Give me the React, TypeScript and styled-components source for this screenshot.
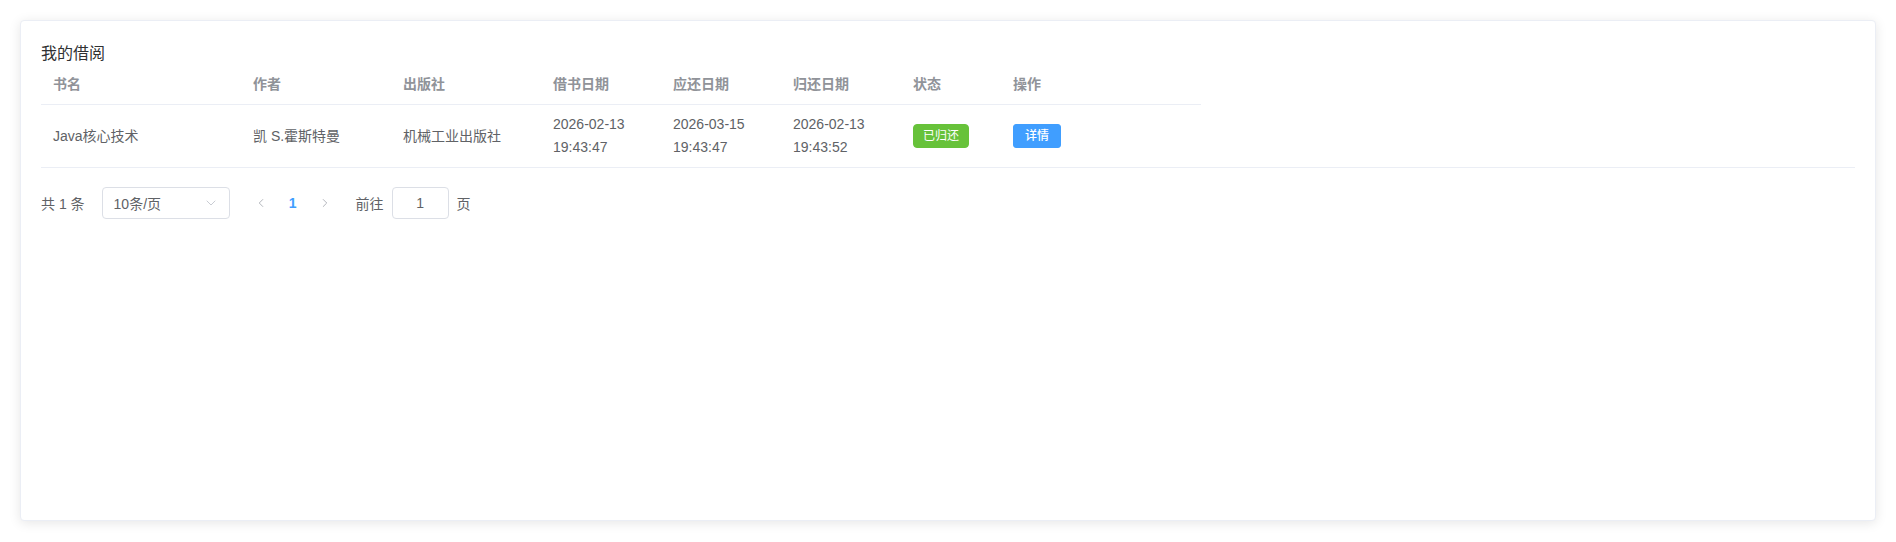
import React from "react";
import styled, { createGlobalStyle } from "styled-components";
import { ChevronDown, ChevronLeft, ChevronRight } from "lucide-react";

const GlobalStyle = createGlobalStyle`
  html, body {
    margin: 0;
    padding: 0;
    background: #fff;
  }
  body {
    font-family: "Liberation Sans", "Noto Sans CJK SC", Arial, sans-serif;
    color: #606266;
    -webkit-font-smoothing: antialiased;
  }
  * {
    box-sizing: border-box;
  }
`;

const Page = styled.div`
  padding: 20px;
`;

const Card = styled.div`
  height: 501px;
  background: #fff;
  border: 1px solid #ebeef5;
  border-radius: 4px;
  box-shadow: 0 2px 12px 0 rgba(0, 0, 0, 0.1);
  padding: 20px;
  overflow: hidden;
`;

const Title = styled.div`
  padding-top: 2px;
  font-size: 16px;
  line-height: 22px;
  color: #303133;
`;

const Table = styled.div`
  border-bottom: 1px solid #ebeef5;
`;

const Row = styled.div<{ $head?: boolean }>`
  display: grid;
  grid-template-columns: 200px 150px 150px 120px 120px 120px 100px 200px;
  width: 1160px;
  align-items: center;
  border-bottom: ${(p) => (p.$head ? "1px solid #ebeef5" : "none")};
`;

const Cell = styled.div<{ $head?: boolean }>`
  padding: 8px 12px;
  font-size: 14px;
  line-height: 23px;
  color: ${(p) => (p.$head ? "#909399" : "#606266")};
  font-weight: ${(p) => (p.$head ? 700 : 400)};
  white-space: nowrap;
`;

const Tag = styled.span`
  display: inline-block;
  height: 24px;
  line-height: 22px;
  padding: 0 9px;
  font-size: 12px;
  color: #fff;
  background: #67c23a;
  border: 1px solid #67c23a;
  border-radius: 4px;
  vertical-align: middle;
`;

const Button = styled.button`
  height: 24px;
  padding: 0 11px;
  font-family: inherit;
  font-size: 12px;
  font-weight: 500;
  line-height: 22px;
  color: #fff;
  background: #409eff;
  border: 1px solid #409eff;
  border-radius: 3px;
  cursor: pointer;
  vertical-align: middle;
`;

const Pagination = styled.div`
  display: flex;
  align-items: center;
  height: 32px;
  margin-top: 19px;
  font-size: 14px;
  color: #606266;
`;

const Total = styled.span`
  margin-right: 17px;
  white-space: pre;
`;

const Select = styled.div`
  display: flex;
  align-items: center;
  justify-content: space-between;
  width: 128px;
  height: 32px;
  padding: 0 10px 0 11px;
  border: 1px solid #dcdfe6;
  border-radius: 4px;
  margin-right: 15px;
  color: #606266;
  svg {
    color: #c0c4cc;
  }
`;

const NavButton = styled.span`
  display: flex;
  align-items: center;
  justify-content: center;
  width: 32px;
  height: 32px;
  color: #a8abb2;
`;

const PageNum = styled.span<{ $active?: boolean }>`
  display: flex;
  align-items: center;
  justify-content: center;
  width: 32px;
  height: 32px;
  font-weight: 700;
  color: ${(p) => (p.$active ? "#409eff" : "#606266")};
`;

const Jump = styled.span`
  display: flex;
  align-items: center;
  gap: 8px;
  margin-left: 15px;
`;

const JumpInput = styled.div`
  width: 57px;
  height: 32px;
  border: 1px solid #dcdfe6;
  border-radius: 4px;
  display: flex;
  align-items: center;
  justify-content: center;
  color: #606266;
`;

const columns = ["书名", "作者", "出版社", "借书日期", "应还日期", "归还日期", "状态", "操作"];

const records = [
  {
    title: "Java核心技术",
    author: "凯 S.霍斯特曼",
    publisher: "机械工业出版社",
    borrowed: ["2026-02-13", "19:43:47"],
    due: ["2026-03-15", "19:43:47"],
    returned: ["2026-02-13", "19:43:52"],
    status: "已归还",
  },
];

const DateCell: React.FC<{ value: string[] }> = ({ value }) => (
  <Cell>
    {value[0]}
    <br />
    {value[1]}
  </Cell>
);

export default function App() {
  return (
    <>
      <GlobalStyle />
      <Page>
        <Card>
          <Title>我的借阅</Title>
          <Table>
            <Row $head>
              {columns.map((c) => (
                <Cell key={c} $head>
                  {c}
                </Cell>
              ))}
            </Row>
            {records.map((r) => (
              <Row key={r.title}>
                <Cell>{r.title}</Cell>
                <Cell>{r.author}</Cell>
                <Cell>{r.publisher}</Cell>
                <DateCell value={r.borrowed} />
                <DateCell value={r.due} />
                <DateCell value={r.returned} />
                <Cell>
                  <Tag>{r.status}</Tag>
                </Cell>
                <Cell>
                  <Button type="button">详情</Button>
                </Cell>
              </Row>
            ))}
          </Table>
          <Pagination>
            <Total>共 1 条</Total>
            <Select>
              <span>10条/页</span>
              <ChevronDown size={16} strokeWidth={1.3} />
            </Select>
            <NavButton>
              <ChevronLeft size={14} strokeWidth={1.5} />
            </NavButton>
            <PageNum $active>1</PageNum>
            <NavButton>
              <ChevronRight size={14} strokeWidth={1.5} />
            </NavButton>
            <Jump>
              前往
              <JumpInput>1</JumpInput>
              页
            </Jump>
          </Pagination>
        </Card>
      </Page>
    </>
  );
}
